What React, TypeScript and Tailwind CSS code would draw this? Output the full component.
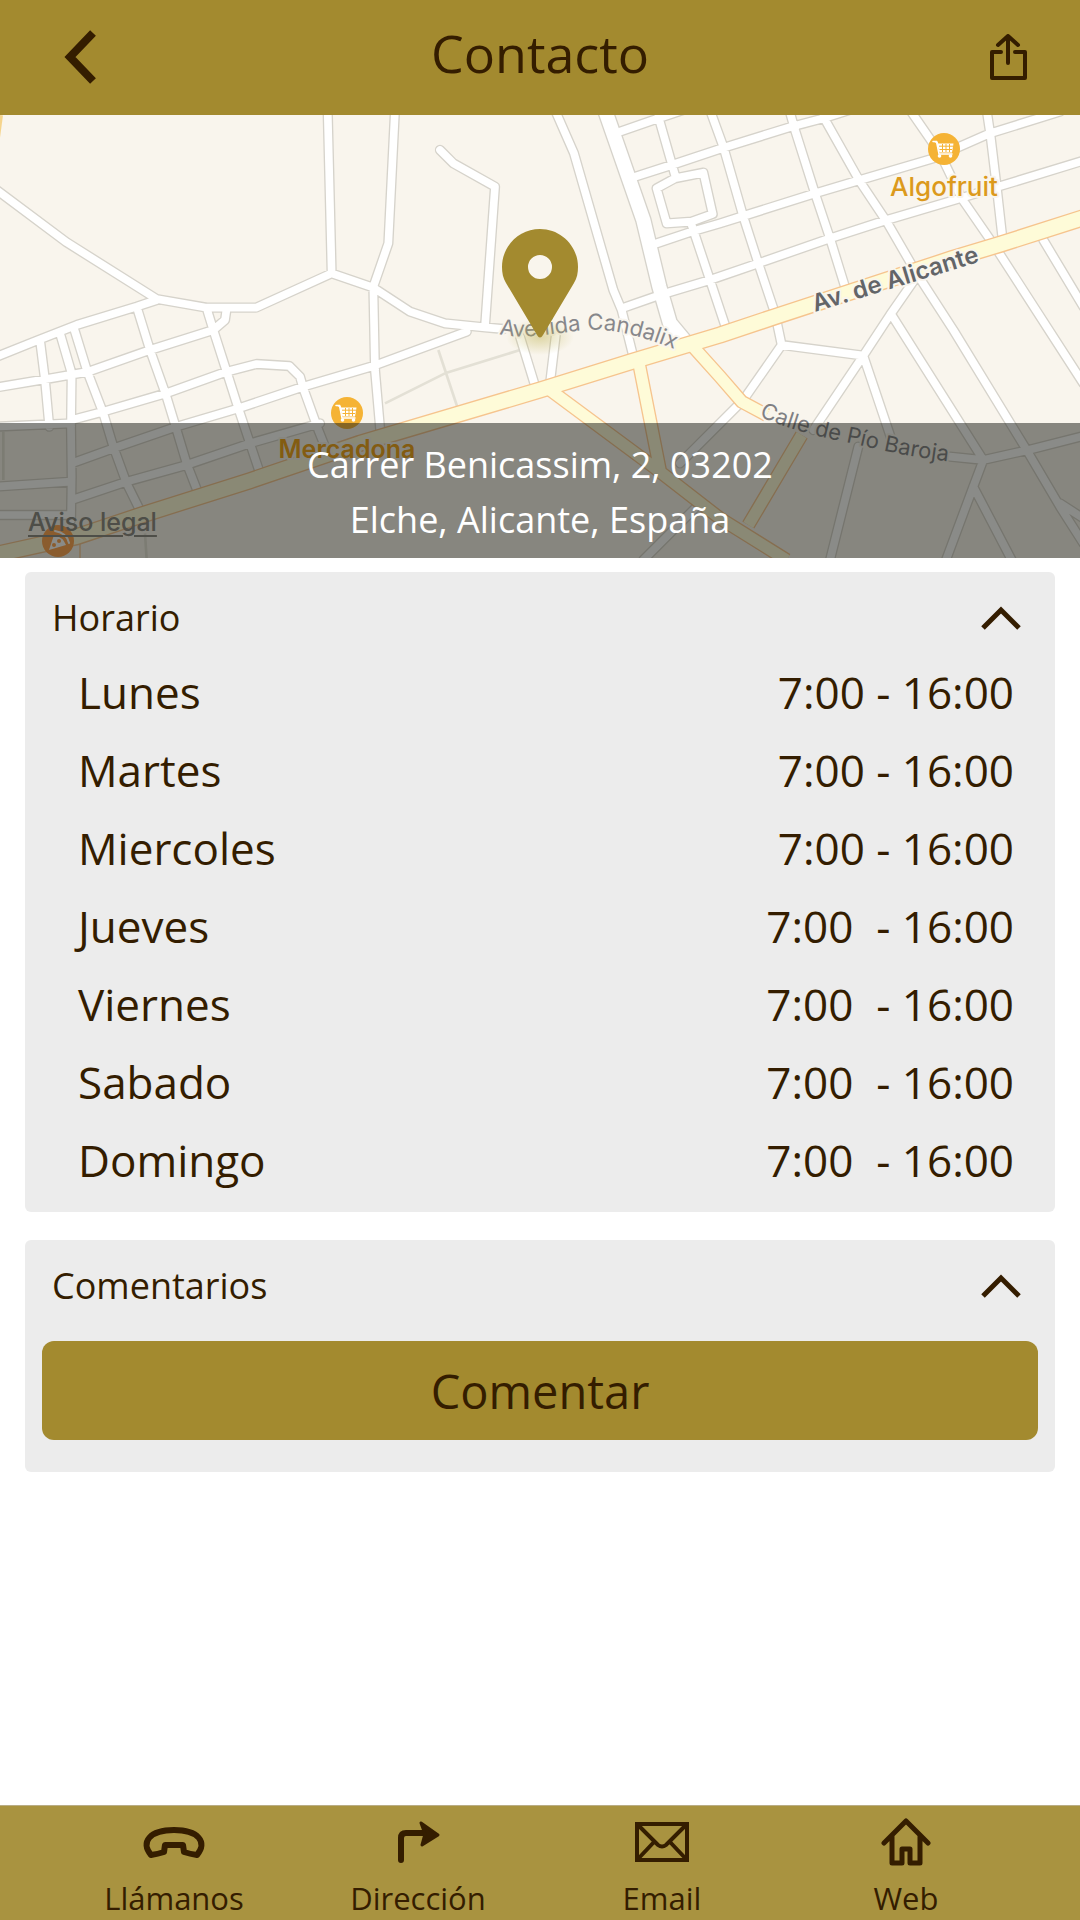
import { useState, type ReactNode } from "react";

const HOURS = [
  { day: "Lunes", time: "7:00 - 16:00" },
  { day: "Martes", time: "7:00 - 16:00" },
  { day: "Miercoles", time: "7:00 - 16:00" },
  { day: "Jueves", time: "7:00  - 16:00" },
  { day: "Viernes", time: "7:00  - 16:00" },
  { day: "Sabado", time: "7:00  - 16:00" },
  { day: "Domingo", time: "7:00  - 16:00" }
] as const;

// Street geometry, in thirds of a pixel
const STREETS = [
  "M-10 240 200 397 470 567 620 593 768 593 995 490 1120 533 1230 605 1335 640 1455 652 1510 657",
  "M983 0 995 490",
  "M-10 740 115 690 230 645 410 590 470 570",
  "M120 690 135 810 148 950",
  "M180 670 215 790 213 950 215 1100 213 1230",
  "M222 655 262 785 310 910 340 1010 380 1120 422 1205",
  "M-10 832 135 808 265 785 450 720 640 660 675 630 680 595",
  "M410 590 450 720 498 855 530 960 560 1060 595 1150",
  "M620 595 640 660 680 785 715 895 750 1000 780 1090",
  "M215 930 310 905 498 850 680 785 770 762 868 768 900 800 910 835 955 960 975 1010",
  "M215 1060 340 1015 530 950 715 895 910 830 1120 768 1400 665",
  "M215 1170 380 1115 560 1065 750 1000 960 940",
  "M-10 950 213 940",
  "M-10 1130 213 1115",
  "M-10 1215 213 1215",
  "M1185 0 1165 400 1120 530 1125 780 1142 975",
  "M1320 120 1360 160 1485 230 1455 650",
  "M1665 0 1722 130 1840 540 1865 600 1900 740",
  "M1560 680 1606 830",
  "M1668 670 1650 820",
  "M1845 70 1975 25 2050 0",
  "M1890 205 2015 165 2165 115 2375 50 2470 25 2580 -10",
  "M1975 20 2025 195",
  "M2025 205 1970 235 2000 340 2075 335 2138 312 2110 188Z",
  "M1955 405 2075 365 2160 340 2230 318 2445 250 2580 210 2800 145 2970 70 3180 5",
  "M2075 345 2130 510 2180 660",
  "M1865 595 1980 555 2130 510 2275 460 2490 385 2660 330 2880 265 2995 230 3250 152",
  "M2130 0 2170 110 2230 320 2275 460 2325 610 2345 705",
  "M2368 0 2385 60 2445 250 2490 385 2535 530",
  "M2470 20 2580 215 2660 335 2750 490 2860 660 3080 1020 3180 1190 3250 1300",
  "M2730 0 2820 130 2885 265 2985 410 3250 820",
  "M2960 0 2972 80 2990 230 3008 390",
  "M3130 390 3250 590",
  "M2750 500 2670 615 2590 737 2345 705 2230 870 2040 1060",
  "M2090 1190 1930 1350",
  "M2590 737 2440 960",
  "M2590 737 2675 990",
  "M2675 615 2950 1050",
  "M2575 1010 2490 1350",
  "M2850 1040 2950 1050 3085 1020 3250 978",
  "M2950 1050 2920 1130 2838 1350",
  "M2920 1130 3035 1350",
  "M3180 1180 3250 1225"
].join("");

const BOULEVARD = "M1815 0 1930 330 1978 530 2010 640 2060 700";

const AVENUES = [
  "M1650 840 1960 1070 2160 1225 2360 1350",
  "M1915 750 1980 1080",
  "M2070 700 2160 800 2225 875 2300 915",
  "M2405 975 2245 1245"
].join("");

const MAIN_AVENUE =
  "M-20 1335 230 1280 425 1215 750 1112 1080 1000 1620 840 1900 753 2160 675 2325 620 2860 445 3000 403 3260 320";

function CartMarker({ x, y }: { x: number; y: number }) {
  return (
    <g transform={`translate(${x} ${y})`}>
      <circle r="16" fill="#f5b335" />
      <path d="M-10.500-7.500h4l.8 2H9.500L8 3.500H-4.500L-7 -5.500z" fill="#fff" />
      <path
        d="M-11-7.500h3.500L-5 5h13"
        fill="none"
        stroke="#fff"
        strokeWidth="1.500"
        strokeLinecap="round"
      />
      <path
        d="M-5-2.800H9M-4.500.500H8M-1.500-5V3M2-5V3M5.500-5V3"
        stroke="#f5b335"
        strokeWidth="1"
      />
      <circle cx="-4.500" cy="7" r="1.800" fill="#fff" />
      <circle cx="6.500" cy="7" r="1.800" fill="#fff" />
    </g>
  );
}

function StreetMap() {
  return (
    <svg
      viewBox="0 0 1080 443"
      preserveAspectRatio="xMidYMid slice"
      className="block h-[443px] w-full bg-[#f9f5ed] font-[Inter,sans-serif]"
      role="img"
      aria-label="Mapa"
    >
      <defs>
        <path id="candalix" d="M499 219C530 226 560 216 590 215S650 223 700 245" />
        <path id="baroja" d="M759 301C790 315 820 322 850 328S900 342 980 350" />
        <radialGradient id="pin-glow">
          <stop offset="0" stopColor="#b5a83a" stopOpacity="0.4" />
          <stop offset="1" stopColor="#b5a83a" stopOpacity="0" />
        </radialGradient>
      </defs>

      <g transform="translate(0 -5) scale(0.33333)" fill="none" strokeLinejoin="round">
        <path
          d="M1155 880 1335 790 1560 720M1315 720 1375 900M10 965V1110M435 1270 440 1350"
          stroke="#e3e0d5"
          strokeWidth="8"
        />
        <g strokeLinecap="round">
          <path d={STREETS} stroke="#d6d3cb" strokeWidth="31" />
          <path d={BOULEVARD} stroke="#d6d3cb" strokeWidth="50" />
          <path d={STREETS} stroke="#fff" strokeWidth="23" />
          <path d={BOULEVARD} stroke="#fff" strokeWidth="42" />
        </g>
        <path d="M-10 90 0 15" stroke="#f5d48c" strokeWidth="18" />
        <path d="M240 1350V1295" stroke="#f6c48e" strokeWidth="4" />
        <path d={AVENUES} stroke="#f6c48e" strokeWidth="42" />
        <path d={MAIN_AVENUE} stroke="#f6c48e" strokeWidth="52" />
        <path d={AVENUES} stroke="#fefbd8" strokeWidth="34" />
        <path d={MAIN_AVENUE} stroke="#fefbd8" strokeWidth="44" />
      </g>

      <g stroke="#f9f5ed" strokeWidth="4" strokeLinejoin="round" paintOrder="stroke">
        <text fontSize="22" fill="#87878b">
          <textPath href="#candalix">Avenida Candalix</textPath>
        </text>
        <text fontSize="22" fill="#7f7f83">
          <textPath href="#baroja">Calle de Pío Baroja</textPath>
        </text>
        <text
          fontSize="24"
          fontWeight="600"
          fill="#636568"
          transform="translate(815 197) rotate(-17)"
        >
          Av. de Alicante
        </text>
        <text x="944" y="81" fontSize="26" fontWeight="500" fill="#dc9a1c" textAnchor="middle">
          Algofruit
        </text>
        <text x="347" y="343" fontSize="25" fontWeight="600" fill="#f0a010" textAnchor="middle">
          Mercadona
        </text>
      </g>

      <CartMarker x={944} y={34} />
      <CartMarker x={347} y={298} />

      <g transform="translate(58 426)">
        <circle r="16" fill="#ffa04a" />
        <path d="M-9 9-4-6Q5-4 8 4Z" fill="#fff" strokeLinejoin="round" />
        <path d="M-3-10Q9-8 11 2" fill="none" stroke="#fff" strokeWidth="2" strokeLinecap="round" />
        <circle cx="-4" cy="4" r="2" fill="#ffa04a" />
        <circle cx="1" cy="0" r="2" fill="#ffa04a" />
      </g>

      <ellipse cx="540" cy="222" rx="34" ry="18" fill="url(#pin-glow)" />
      <path
        fill="#a38a2f"
        fillRule="evenodd"
        d="M540 114C519 114 502 131 502 152C502 158 503 163 506 168L537 220Q540 225 543 220L574 168C577 163 578 158 578 152C578 131 561 114 540 114ZM540 140a12 12 0 1 1 0 24a12 12 0 1 1 0-24Z"
      />
    </svg>
  );
}

function Panel({ title, children }: { title: string; children: ReactNode }) {
  const [open, setOpen] = useState(true);

  return (
    <section className="rounded-md bg-[#ececec] pt-[11px]">
      <button
        type="button"
        aria-expanded={open}
        onClick={() => setOpen(!open)}
        className="flex h-[70px] w-full items-center justify-between pr-8 pl-[27px]"
      >
        <h2 className="text-[36px] leading-[48px]">{title}</h2>
        <svg
          viewBox="0 0 44 28"
          className={open ? "h-7 w-11" : "h-7 w-11 rotate-180"}
          fill="none"
          stroke="currentColor"
          strokeWidth="5"
          aria-hidden
        >
          <path d="M4 24 22 6 40 24" />
        </svg>
      </button>
      {open && children}
    </section>
  );
}

const TABS = [
  {
    label: "Llámanos",
    href: "tel:",
    icon: (
      <path
        d="M9 37C-2 24 8 12 32 12S66 24 55 37Q48 36 42 34L41 27H23L22 34Q16 36 9 37Z"
        strokeWidth="6"
        strokeLinejoin="round"
      />
    )
  },
  {
    label: "Dirección",
    href: "#direccion",
    icon: (
      <>
        <path d="M15 42V20Q15 15 20 15H40" strokeWidth="6" strokeLinecap="round" />
        <path
          d="M35 5 52 17 36 27 39 16Z"
          fill="currentColor"
          strokeWidth="3"
          strokeLinejoin="round"
        />
      </>
    )
  },
  {
    label: "Email",
    href: "mailto:",
    icon: (
      <path d="M7 6H57V42H7ZM7 6 28 27Q32 30 36 27L57 6M7 42 24 24M57 42 40 24" strokeWidth="4" />
    )
  },
  {
    label: "Web",
    href: "#web",
    icon: (
      <path
        d="M10 25 32 3 54 25M18 18V45H28V31H36V45H46V18"
        strokeLinecap="round"
        strokeLinejoin="round"
      />
    )
  }
];

export default function App() {
  return (
    <div className="flex min-h-screen flex-col bg-white font-['Open_Sans',sans-serif] text-[#341d00]">
      <header className="flex h-[115px] items-center justify-between bg-[#a38a2f] px-12">
        <button type="button" aria-label="Volver" className="w-16 pl-2">
          <svg viewBox="0 0 48 60" className="h-[60px] w-12" fill="none" aria-hidden>
            <path d="M37 5 14 29 37 53" stroke="currentColor" strokeWidth="8" />
          </svg>
        </button>
        <h1 className="pb-2.5 text-[52px] leading-[72px]">Contacto</h1>
        <button type="button" aria-label="Compartir" className="flex w-16 justify-end">
          <svg
            viewBox="0 0 48 48"
            className="h-12 w-12"
            fill="none"
            stroke="currentColor"
            strokeWidth="4"
            aria-hidden
          >
            <path d="M17 18H8V44H41V18H31" strokeLinejoin="round" strokeLinecap="round" />
            <path d="M24 29V3M14 11 24 2 34 11" strokeLinecap="round" strokeLinejoin="round" />
          </svg>
        </button>
      </header>

      <div className="relative">
        <StreetMap />
        <a
          href="#aviso-legal"
          className="absolute bottom-5 left-7 font-[Inter,sans-serif] text-[25px] leading-8 font-medium text-[#86847f] underline decoration-2 underline-offset-4"
        >
          Aviso legal
        </a>
        <div className="absolute inset-x-0 bottom-0 flex justify-center bg-[#161712]/50 pt-3.5 pb-[11px]">
          <address className="max-w-[500px] text-center text-[36px] leading-[55px] text-white not-italic">
            Carrer Benicassim, 2, 03202 Elche, Alicante, España
          </address>
        </div>
      </div>

      <main className="flex flex-col gap-7 px-[25px] pt-3.5 pb-8">
        <Panel title="Horario">
          <div className="pr-[41px] pb-[13px] pl-[53px]">
            <table className="w-full text-[44px] leading-[60px]">
              <tbody>
                {HOURS.map((h) => (
                  <tr key={h.day} className="h-[78px]">
                    <th scope="row" className="p-0 text-left font-normal">
                      {h.day}
                    </th>
                    <td className="p-0 text-right whitespace-pre">{h.time}</td>
                  </tr>
                ))}
              </tbody>
            </table>
          </div>
        </Panel>

        <Panel title="Comentarios">
          <div className="px-[17px] pt-5 pb-8">
            <button
              type="button"
              className="block h-[99px] w-full rounded-xl bg-[#a38a2f] text-[47px] leading-[64px]"
            >
              Comentar
            </button>
          </div>
        </Panel>
      </main>

      <nav className="mt-auto grid grid-cols-4 border-t border-[#b9ad85] bg-[#a99340] px-[52px] pt-3 pb-1">
        {TABS.map((tab) => (
          <a key={tab.label} href={tab.href} className="flex flex-col items-center gap-3.5">
            <svg
              viewBox="0 0 64 48"
              className="h-12 w-16"
              fill="none"
              stroke="currentColor"
              strokeWidth="5"
              aria-hidden
            >
              {tab.icon}
            </svg>
            <span className="text-[31px] leading-9">{tab.label}</span>
          </a>
        ))}
      </nav>
    </div>
  );
}
